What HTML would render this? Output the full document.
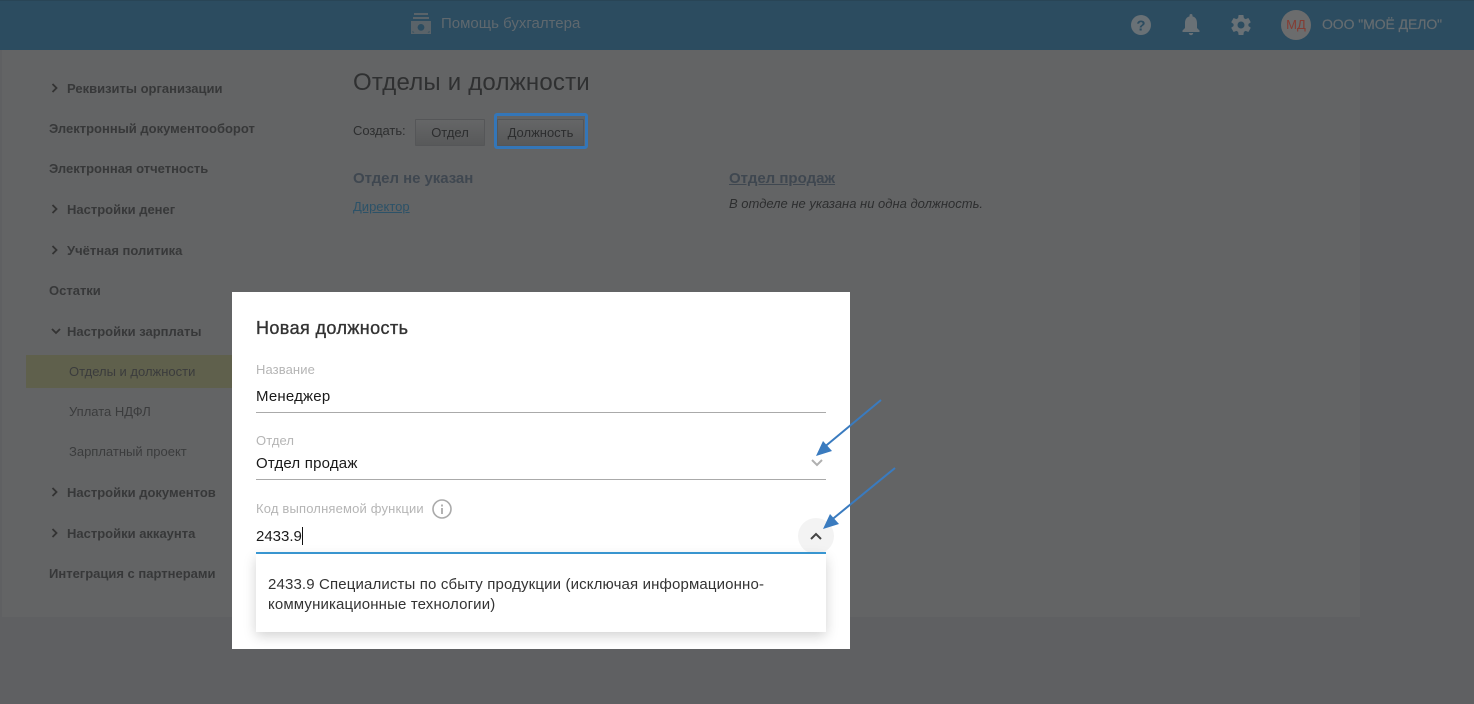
<!DOCTYPE html>
<html lang="ru"><head><meta charset="utf-8"><title>Отделы и должности</title>
<style>
html,body{margin:0;padding:0;width:1474px;height:704px;overflow:hidden;background:#5f6062;font-family:"Liberation Sans",sans-serif}
.a{position:absolute;white-space:nowrap}
#hd{position:absolute;left:0;top:0;width:1474px;height:50px;background:#2c4c60;border-top:1px solid #294556;box-sizing:border-box}
#pn{position:absolute;left:2px;top:50px;width:1358px;height:567px;background:#636465}
.s{left:49px;font-size:13px;font-weight:bold;color:#373839;line-height:16px;letter-spacing:0}
.s.i{left:67px}
.c{left:69px;font-size:13px;color:#3b3c3d;line-height:16px}
#sel{position:absolute;left:26px;top:355px;width:206px;height:33px;background:#5f604c}
.btn{position:absolute;box-sizing:border-box;height:27px;top:119px;border:1px solid #555658;border-radius:1px;background:linear-gradient(#656667,#58595a);font-size:13px;color:#2c2d2e;text-align:center;line-height:26px}
#md{position:absolute;left:232px;top:292px;width:618px;height:357px;background:#fff}
.l{font-size:13px;color:#b5b5b5;line-height:16px;letter-spacing:.1px}
.v{font-size:15px;color:#1a1a1a;line-height:18px;letter-spacing:.2px}
.ln{position:absolute;height:1px;background:#aaa;left:256px;width:570px}
svg{position:absolute;overflow:visible}
</style></head><body>
<div id="hd"></div>
<svg style="left:411px;top:13px" width="20" height="21" viewBox="0 0 20 21"><rect x="3" y="0" width="14" height="2" fill="#5a6369"/><rect x="2" y="4" width="16" height="2" fill="#5a6369"/><path fill="#5a6369" fill-rule="evenodd" d="M0 8h20v13H0zM10 11a3.4 3.4 0 1 0 0 6.8 3.4 3.4 0 0 0 0-6.8zM1.500 18v1.500h2zM18.500 18l-2 1.500h2z"/></svg>
<div class="a" style="left:441px;top:15px;font-size:15px;line-height:18px;color:#5f686e">Помощь бухгалтера</div>
<svg style="left:1131px;top:15px" width="20" height="20" viewBox="0 0 20 20"><circle cx="10" cy="10" r="10" fill="#697176"/><text x="10" y="15.500" text-anchor="middle" font-family="Liberation Sans" font-weight="bold" font-size="15" fill="#2c4c60">?</text></svg>
<svg style="left:1182px;top:14px" width="18" height="22" viewBox="0 0 18 22"><path fill="#697176" d="M9 0a1.500 1.500 0 0 1 1.500 1.500v.9C13.600 3.100 15 5.800 15 9v5l2.500 2.500V18H.5v-1.500L3 14V9c0-3.200 1.400-5.900 4.500-6.600v-.9A1.500 1.500 0 0 1 9 0zM6.800 19h4.400a2.200 2.200 0 0 1-4.400 0z"/></svg>
<svg style="left:1229px;top:13px" width="24" height="24" viewBox="0 0 24 24"><path fill="#697176" d="M19.400 13a7.600 7.600 0 0 0 0-2l2.400-1.800-2.400-4.200-2.800 1.100a7.500 7.500 0 0 0-1.700-1L14.400 2H9.600l-.5 3.100a7.500 7.500 0 0 0-1.700 1L4.600 5 2.200 9.200 4.600 11a7.600 7.600 0 0 0 0 2l-2.400 1.800L4.600 19l2.800-1.100a7.500 7.500 0 0 0 1.700 1l.5 3.100h4.800l.5-3.100a7.500 7.500 0 0 0 1.700-1l2.800 1.100 2.400-4.200zM12 15.500a3.500 3.500 0 1 1 0-7 3.500 3.500 0 0 1 0 7z"/></svg>
<div class="a" style="left:1281px;top:10px;width:30px;height:30px;border-radius:50%;background:#6b6c6d;color:#843c33;font-size:13px;line-height:30px;text-align:center">МД</div>
<div class="a" style="left:1322px;top:16px;font-size:14px;line-height:17px;color:#656c70;letter-spacing:-.08px;-webkit-text-stroke:.2px #656c70">ООО "МОЁ ДЕЛО"</div>

<div id="pn"></div>
<div id="sel"></div>
<svg style="left:51px;top:83px" width="7" height="10" fill="none" stroke="#333" stroke-width="1.800"><path d="M1.500 1l4 4-4 4"/></svg>
<div class="a s i" style="top:81px">Реквизиты организации</div>
<div class="a s" style="top:121px">Электронный документооборот</div>
<div class="a s" style="top:161px">Электронная отчетность</div>
<svg style="left:51px;top:204px" width="7" height="10" fill="none" stroke="#333" stroke-width="1.800"><path d="M1.500 1l4 4-4 4"/></svg>
<div class="a s i" style="top:202px">Настройки денег</div>
<svg style="left:51px;top:245px" width="7" height="10" fill="none" stroke="#333" stroke-width="1.800"><path d="M1.500 1l4 4-4 4"/></svg>
<div class="a s i" style="top:243px">Учётная политика</div>
<div class="a s" style="top:283px">Остатки</div>
<svg style="left:51px;top:328px" width="10" height="7" fill="none" stroke="#333" stroke-width="1.800"><path d="M1 1l4 4 4-4"/></svg>
<div class="a s i" style="top:324px">Настройки зарплаты</div>
<div class="a c" style="top:364px">Отделы и должности</div>
<div class="a c" style="top:404px">Уплата НДФЛ</div>
<div class="a c" style="top:444px">Зарплатный проект</div>
<svg style="left:51px;top:487px" width="7" height="10" fill="none" stroke="#333" stroke-width="1.800"><path d="M1.500 1l4 4-4 4"/></svg>
<div class="a s i" style="top:485px">Настройки документов</div>
<svg style="left:51px;top:528px" width="7" height="10" fill="none" stroke="#333" stroke-width="1.800"><path d="M1.500 1l4 4-4 4"/></svg>
<div class="a s i" style="top:526px">Настройки аккаунта</div>
<div class="a s" style="top:566px">Интеграция с партнерами</div>

<div class="a" style="left:353px;top:69px;font-size:24px;line-height:28px;color:#2f3031;letter-spacing:.2px">Отделы и должности</div>
<div class="a" style="left:353px;top:123px;font-size:13px;line-height:16px;color:#2d2e2f;letter-spacing:-.05px">Создать:</div>
<div class="btn" style="left:415px;width:70px">Отдел</div>
<div class="btn" style="left:497px;width:87px">Должность</div>
<div class="a" style="left:494px;top:113px;width:94px;height:36px;box-sizing:border-box;border:3px solid #3476b8;border-radius:3px"></div>
<div class="a" style="left:353px;top:170px;font-size:15px;font-weight:bold;line-height:18px;color:#3f4750;letter-spacing:-.05px">Отдел не указан</div>
<div class="a" style="left:353px;top:199px;font-size:13px;line-height:16px;color:#2c5268;text-decoration:underline">Директор</div>
<div class="a" style="left:729px;top:170px;font-size:15px;font-weight:bold;line-height:18px;color:#3f4750;text-decoration:underline">Отдел продаж</div>
<div class="a" style="left:729px;top:196px;font-size:13px;font-style:italic;line-height:16px;color:#2d2e2f">В отделе не указана ни одна должность.</div>

<div id="md"></div>
<div class="a" style="left:256px;top:318px;font-size:18px;line-height:20px;color:#333;letter-spacing:.4px;-webkit-text-stroke:.35px #333">Новая должность</div>
<div class="a l" style="left:256px;top:362px">Название</div>
<div class="a v" style="left:256px;top:388px">Менеджер</div>
<div class="ln" style="top:412px"></div>
<div class="a l" style="left:256px;top:433px">Отдел</div>
<div class="a v" style="left:256px;top:455px">Отдел продаж</div>
<svg style="left:811px;top:459px" width="12" height="8" fill="none" stroke="#b0b0b0" stroke-width="2"><path d="M1 1l5 5 5-5"/></svg>
<div class="ln" style="top:479px"></div>
<div class="a l" style="left:256px;top:501px;letter-spacing:.17px">Код выполняемой функции</div>
<svg style="left:432px;top:499px" width="20" height="20" viewBox="0 0 20 20"><circle cx="10" cy="10" r="9" fill="none" stroke="#aaa" stroke-width="1.600"/><rect x="9.100" y="9" width="1.800" height="6" fill="#aaa"/><rect x="9.100" y="5.500" width="1.800" height="2" fill="#aaa"/></svg>
<div class="a v" style="left:256px;top:528px;letter-spacing:0">2433.9</div>
<div class="a" style="left:302px;top:527px;width:1px;height:18px;background:#111"></div>
<div class="a" style="left:798px;top:518px;width:36px;height:36px;border-radius:50%;background:#f3f3f3"></div>
<svg style="left:810px;top:532px" width="12" height="8" fill="none" stroke="#444" stroke-width="2"><path d="M1 7l5-5 5 5"/></svg>
<div class="a" style="left:256px;top:552px;width:570px;height:2px;background:#3b9bd8"></div>
<div class="a" style="left:256px;top:554px;width:570px;height:78px;background:#fff;box-shadow:0 4px 12px rgba(0,0,0,.18)"></div>
<div class="a" style="left:268px;top:575px;font-size:15px;line-height:20px;color:#333;letter-spacing:.14px">2433.9 Специалисты по сбыту продукции (исключая информационно-<br>коммуникационные технологии)</div>

<svg style="left:0;top:0" width="1474" height="704">
<path d="M881 400L822 449" stroke="#3a7bbf" stroke-width="2" fill="none"/><path d="M816 456l7-15 9 10z" fill="#3a7bbf"/>
<path d="M895 468L829 522" stroke="#3a7bbf" stroke-width="2" fill="none"/><path d="M823 529l7-15 9 10z" fill="#3a7bbf"/>
</svg>
</body></html>
